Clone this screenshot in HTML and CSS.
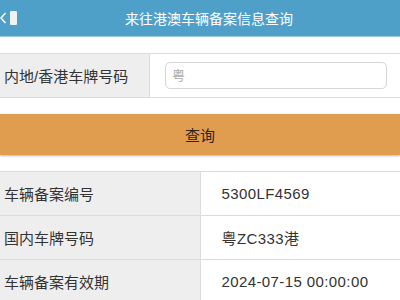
FILE: index.html
```html
<!DOCTYPE html>
<html lang="zh-CN">
<head>
    <meta charset="UTF-8">
    <meta name="viewport" content="width=device-width, initial-scale=1.0">
    <title>来往港澳车辆备案信息查询</title>
    <link rel="stylesheet" href="styles.css">
</head>
<body>
    <header class="top-bar">
        <div class="back">
            <svg width="7" height="14" viewBox="0 0 7 14">
                <path d="M5.5 2 L1 7 L5.5 12" fill="none" stroke="#fff" stroke-width="1.6"/>
            </svg>
            <span class="back-box"></span>
        </div>
        <h1>来往港澳车辆备案信息查询</h1>
    </header>

    <div class="query-row">
        <div class="query-label">内地/香港车牌号码</div>
        <div class="query-field">
            <input type="text" placeholder="粤">
        </div>
    </div>

    <button class="query-button">查询</button>

    <table class="result">
        <tr>
            <th>车辆备案编号</th>
            <td>5300LF4569</td>
        </tr>
        <tr>
            <th>国内车牌号码</th>
            <td>粤ZC333港</td>
        </tr>
        <tr>
            <th>车辆备案有效期</th>
            <td>2024-07-15 00:00:00</td>
        </tr>
    </table>
</body>
</html>
```

FILE: styles.css
```css
* {
    margin: 0;
    padding: 0;
    box-sizing: border-box;
}
body {
    font-family: "Liberation Sans", "Noto Sans CJK SC", sans-serif;
    background: #fff;
    color: #333;
}
.top-bar {
    height: 37px;
    background: #4fa0c9;
    display: flex;
    align-items: center;
    border-bottom: 1px solid #9cc9e0;
}
.back {
    display: flex;
    align-items: center;
    gap: 3px;
    width: 125px;
    flex-shrink: 0;
}
.back svg {
    display: block;
}
.back-box {
    width: 7px;
    height: 14px;
    background: #f2f2f2;
    border-radius: 1px;
}
.top-bar h1 {
    font-size: 14px;
    font-weight: normal;
    color: #fff;
    white-space: nowrap;
}
.query-row {
    margin-top: 16px;
    height: 45px;
    display: flex;
    border-top: 1px solid #dcdcdc;
    border-bottom: 1px solid #dcdcdc;
}
.query-label {
    width: 150px;
    background: #eeeeee;
    border-right: 1px solid #dcdcdc;
    font-size: 15px;
    display: flex;
    align-items: center;
    padding-left: 4px;
    white-space: nowrap;
}
.query-field {
    flex: 1;
    display: flex;
    align-items: center;
    padding: 0 13px 0 15px;
}
.query-field input {
    width: 100%;
    height: 27px;
    border: 1px solid #d6d6d6;
    border-radius: 5px;
    padding-left: 6px;
    font-family: inherit;
    font-size: 13px;
    outline: none;
}
.query-field input::placeholder {
    color: #aaa;
}
.query-button {
    display: block;
    width: 100%;
    height: 41px;
    margin-top: 16px;
    background: #e19d4f;
    border: none;
    box-shadow: 0 1px 2px rgba(0, 0, 0, 0.3);
    font-family: inherit;
    font-size: 15px;
    color: #2e2418;
}
.result {
    margin-top: 16px;
    width: 100%;
    border-collapse: collapse;
    border-top: 1px solid #dcdcdc;
}
.result th,
.result td {
    height: 44px;
    border-bottom: 1px solid #dcdcdc;
    font-size: 15px;
    font-weight: normal;
    text-align: left;
    white-space: nowrap;
}
.result th {
    width: 200px;
    background: #eeeeee;
    border-right: 1px solid #dcdcdc;
    padding-left: 4px;
}
.result td {
    padding-left: 21px;
    letter-spacing: 0.4px;
}
```
